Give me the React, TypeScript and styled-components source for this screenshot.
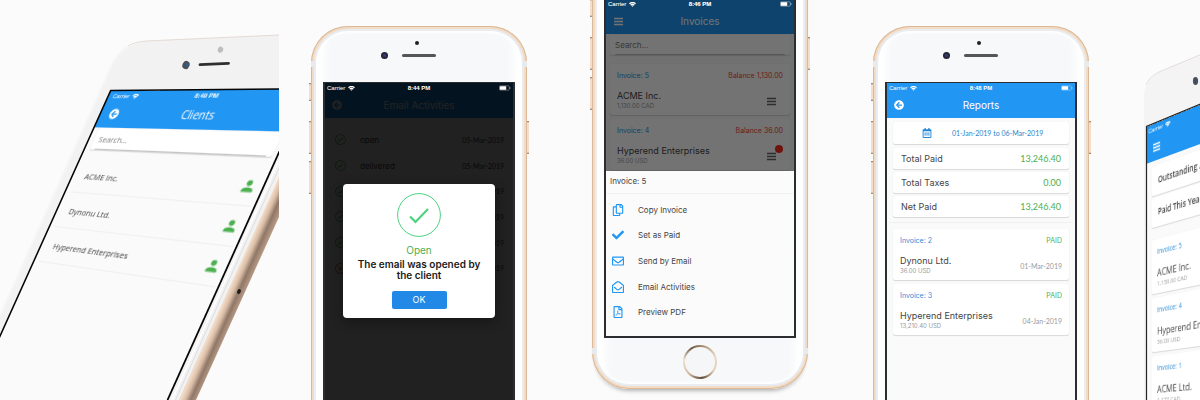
import React from 'react';
import styled, { createGlobalStyle, css } from 'styled-components';
import {
  FaArrowCircleLeft,
  FaCheck,
  FaRegCalendarAlt,
  FaRegCopy,
  FaRegEnvelope,
  FaRegEnvelopeOpen,
  FaRegFilePdf,
} from 'react-icons/fa';
import { IoIosCheckmarkCircleOutline, IoIosCloseCircleOutline, IoMdPerson } from 'react-icons/io';

const color = {
  page: '#fbfbfb',
  blue: '#2196f3',
  green: '#4caf50',
  red: '#f44336',
  text: '#444444',
  muted: '#9a9a9a',
};

const font = {
  main: 'Inter, "Liberation Sans", sans-serif',
  figures: 'Lato, Inter, sans-serif',
  tilted: '"Open Sans", "Noto Sans", sans-serif',
  status: '"Liberation Sans", sans-serif',
};

const GlobalStyle = createGlobalStyle`
  * { box-sizing: border-box; }
  body {
    margin: 0;
    background: ${color.page};
    font-family: ${font.main};
    color: ${color.text};
  }
  button, input { font: inherit; color: inherit; }
  p, h2, h3, ul { margin: 0; padding: 0; font: inherit; }
`;

type Point = [number, number];

/* Projects a flat w x h rectangle onto the corners
   top-left, top-right, bottom-left, bottom-right. */
function project(w: number, h: number, [tl, tr, bl, br]: Point[]) {
  const d1 = [tr[0] - br[0], tr[1] - br[1]];
  const d2 = [bl[0] - br[0], bl[1] - br[1]];
  const s = [tl[0] - tr[0] + br[0] - bl[0], tl[1] - tr[1] + br[1] - bl[1]];
  const det = d1[0] * d2[1] - d1[1] * d2[0];
  const g = (s[0] * d2[1] - s[1] * d2[0]) / det;
  const k = (d1[0] * s[1] - d1[1] * s[0]) / det;
  const m = [
    (tr[0] * (1 + g) - tl[0]) / w, (tr[1] * (1 + g) - tl[1]) / w, 0, g / w,
    (bl[0] * (1 + k) - tl[0]) / h, (bl[1] * (1 + k) - tl[1]) / h, 0, k / h,
    0, 0, 1, 0,
    tl[0], tl[1], 0, 1,
  ];
  return `matrix3d(${m.map((n) => n.toFixed(8)).join(',')})`;
}

/* ---------- Gallery ---------- */

const Gallery = styled.main`
  display: flex;
  width: 100%;
  height: 100vh;
  overflow: hidden;
`;

const Slide = styled.section<{ $drop?: number; $lift?: number }>`
  flex: 0 0 281px;
  padding: ${(p) => p.$drop ?? 0}px 33px 0 32px;
  margin-top: ${(p) => -(p.$lift ?? 0)}px;
`;

const TiltedSlide = styled.section<{ $width: number }>`
  flex: 0 0 ${(p) => p.$width}px;
  height: 100%;
  position: relative;
  overflow: hidden;
`;

const BodyDrawing = styled.svg`
  position: absolute;
  top: 0;
  left: 0;
  pointer-events: none;
`;

const TiltedScreen = styled.div<{ $matrix: string }>`
  position: absolute;
  top: 0;
  left: 0;
  width: 188px;
  background: #fafafa;
  font-family: ${font.tilted};
  transform-origin: 0 0;
  transform: ${(p) => p.$matrix};
`;

/* ---------- Phone ---------- */

const Body = styled.div<{ $shadow?: boolean }>`
  position: relative;
  width: 216px;
  height: 447px;
  padding: 56px 12px 51px;
  border-radius: 37px;
  background: linear-gradient(90deg, #ffffff 8px, #f6f8f9 20px, #f6f8f9 196px, #ffffff 208px);
  box-shadow: inset 0 0 0 1px #dab898, inset 0 0 0 3px #f3dcc6, inset 0 0 0 5px #e9edf1, inset 0 0 3px 7px #ffffff
    ${(p) => p.$shadow && css`, 0 5px 5px -4px rgba(0, 0, 0, 0.4)`};
`;

const Key = styled.i<{ $top: number; $height: number; $right?: boolean }>`
  position: absolute;
  top: ${(p) => p.$top}px;
  ${(p) => (p.$right ? 'right: -2px;' : 'left: -2px;')}
  width: 2px;
  height: ${(p) => p.$height}px;
  background: linear-gradient(#8b7560, #f4decb 2px, #f4decb calc(100% - 2px), #8b7560);
`;

const Antenna = styled.i<{ $top: number }>`
  position: absolute;
  left: 0;
  right: 0;
  top: ${(p) => p.$top}px;
  height: 6px;
  border: solid #e6eaed;
  border-width: 0 4px;
`;

const Sensor = styled.i`
  position: absolute;
  top: 15px;
  left: 104px;
  width: 4px;
  height: 4px;
  border-radius: 50%;
  background: #222222;
`;

const Camera = styled.i`
  position: absolute;
  top: 26px;
  left: 70px;
  width: 7px;
  height: 7px;
  border-radius: 50%;
  background: radial-gradient(#3b3f80, #20222c 60%);
`;

const Speaker = styled.i`
  position: absolute;
  top: 28px;
  left: 91px;
  width: 34px;
  height: 3px;
  border-radius: 2px;
  background: #555555;
`;

const HomeButton = styled.i`
  position: absolute;
  left: 91px;
  bottom: 10px;
  width: 34px;
  height: 34px;
  border-radius: 50%;
  border: 2px solid transparent;
  background: linear-gradient(#f4f6f7, #f4f6f7) padding-box,
    conic-gradient(from 20deg, #b59c82, #e9d9c6, #e3cdb4, #5f4a36, #d5bda3, #f0e2d2, #6e5943, #b59c82) border-box;
`;

const Screen = styled.div`
  position: relative;
  display: flex;
  flex-direction: column;
  height: 340px;
  border: 2px solid #2b2e31;
  border-top-width: 1px;
  background: #fafafa;
  overflow: hidden;
`;

function Phone({ children, shadow }: { children: React.ReactNode; shadow?: boolean }) {
  return (
    <Body $shadow={shadow}>
      <Key $top={57} $height={18} />
      <Key $top={95} $height={33} />
      <Key $top={135} $height={33} />
      <Key $top={95} $height={33} $right />
      <Antenna $top={35} />
      <Antenna $top={406} />
      <Sensor />
      <Camera />
      <Speaker />
      <Screen>{children}</Screen>
      <HomeButton />
    </Body>
  );
}

/* ---------- App bar ---------- */

const Bar = styled.header<{ $wide?: boolean }>`
  flex: none;
  width: ${(p) => (p.$wide ? 'calc(100% + 12px)' : '100%')};
  height: 35px;
  padding-left: ${(p) => (p.$wide ? 3 : 0)}px;
  background: ${color.blue};
  color: #ffffff;
`;

const Status = styled.div`
  display: grid;
  grid-template-columns: 1fr auto 1fr;
  align-items: center;
  height: 10px;
  padding: 0 2px;
  color: #ffffff;
  font: 6px/10px ${font.status};

  svg { display: block; }
`;

const Carrier = styled.span`
  display: flex;
  align-items: center;
  gap: 3px;
`;

const Clock = styled.b`
  font-weight: 700;
`;

const Battery = styled.span`
  justify-self: end;
`;

const TitleRow = styled.div`
  display: grid;
  grid-template-columns: 16px 1fr 16px;
  align-items: center;
  height: 24px;
  padding: 0 4px;
`;

const Title = styled.h2`
  text-align: center;
  font-size: 10px;
  line-height: 12px;
`;

const IconButton = styled.button`
  display: grid;
  place-items: center;
  padding: 0;
  border: 0;
  background: none;
`;

function Burger() {
  return (
    <svg width="9" height="9" viewBox="0 0 9 9" aria-hidden="true">
      <path d="M0 1.500h9M0 4.500h9M0 7.500h9" stroke="currentColor" strokeWidth="1.300" />
    </svg>
  );
}

function StatusBar({ time }: { time: string }) {
  return (
    <Status>
      <Carrier>
        Carrier
        <svg width="7" height="5" viewBox="0 0 14 10" fill="none" stroke="#fff" strokeWidth="2.400">
          <path d="M1 3.600C4.400.4 9.600.4 13 3.600M3.400 6.200c2-1.900 5.200-1.900 7.200 0" />
          <path d="M5 7.500c1.200-1 2.800-1 4 0l-2 2z" fill="#fff" stroke="none" />
        </svg>
      </Carrier>
      <Clock>{time}</Clock>
      <Battery>
        <svg width="12" height="6" viewBox="0 0 12 6">
          <rect x=".3" y=".8" width="10" height="4.400" rx="1" fill="none" stroke="#fff" strokeOpacity=".6" strokeWidth=".5" />
          <rect x=".8" y="1.200" width="6.400" height="3.600" rx=".5" fill="#fff" />
          <path d="M11 2.200v1.600" stroke="#fff" strokeOpacity=".6" strokeWidth=".7" />
        </svg>
      </Battery>
    </Status>
  );
}

type AppBarProps = { title: string; time: string; menu?: boolean; wide?: boolean };

function AppBar({ title, time, menu, wide }: AppBarProps) {
  return (
    <Bar $wide={wide}>
      <StatusBar time={time} />
      <TitleRow>
        <IconButton aria-label={menu ? 'Menu' : 'Back'}>
          {menu ? <Burger /> : <FaArrowCircleLeft size={10} />}
        </IconButton>
        <Title>{title}</Title>
      </TitleRow>
    </Bar>
  );
}

/* ---------- Cards and lists ---------- */

const Stack = styled.div<{ $inset?: number; $top?: number; $gap?: number }>`
  display: flex;
  flex-direction: column;
  gap: ${(p) => p.$gap ?? 4}px;
  padding: ${(p) => p.$top ?? 4}px ${(p) => p.$inset ?? 6}px 0;
`;

const Card = styled.article`
  border-radius: 2px;
  background: #ffffff;
  box-shadow: 0 1px 1px rgba(0, 0, 0, 0.13), 0 0 1px rgba(0, 0, 0, 0.1);
`;

const SearchCard = styled(Card)<{ $tall?: boolean }>`
  margin: 1px 4px 0 ${(p) => (p.$tall ? 6 : 4)}px;
  padding: 0 5px;
`;

const SearchInput = styled.input`
  display: block;
  width: 100%;
  height: 20px;
  padding: 0;
  border: 0;
  border-bottom: 1px solid #c4c4c4;
  background: none;
  font-size: 8px;
  outline: 0;

  &::placeholder { color: #808080; opacity: 1; }
`;

const SumCard = styled(Card)<{ $tall?: boolean }>`
  display: flex;
  align-items: center;
  justify-content: space-between;
  height: ${(p) => (p.$tall ? 28 : 21)}px;
  padding: 0 8px;
  font-size: ${(p) => (p.$tall ? 8 : 9)}px;
  line-height: 12px;
  font-weight: ${(p) => (p.$tall ? 600 : 400)};
  white-space: nowrap;
`;

const Sum = styled.span`
  color: ${color.green};
  font-family: ${font.figures};
`;

const DateCard = styled(Card)`
  height: 22px;
`;

const DateButton = styled.button`
  display: grid;
  grid-template-columns: 50px 1fr;
  align-items: center;
  width: 100%;
  height: 100%;
  padding: 0 9px;
  border: 0;
  background: none;
  color: #2a86c8;
  font-family: ${font.figures};
  font-size: 7px;
  text-align: left;

  svg { justify-self: center; color: #2186d8; }
`;

const Divider = styled.hr`
  width: 100%;
  margin: 0;
  border: 0;
  border-top: 1px solid #f0f0f0;
`;

const InvoiceBox = styled(Card)`
  display: grid;
  grid-template-columns: 1fr auto;
  grid-template-rows: 9px 22px 8px;
  height: 51px;
  padding: 7px 7px 0;
  white-space: nowrap;
`;

const Tag = styled.span<{ $tone: string; $end?: boolean }>`
  color: ${(p) => p.$tone};
  font-size: 7px;
  line-height: 9px;
  text-align: ${(p) => (p.$end ? 'right' : 'left')};
`;

const Name = styled.h3`
  align-self: end;
  font-size: 9px;
  line-height: 12px;
`;

const Amount = styled.p`
  grid-column: 1;
  color: ${color.muted};
  font-size: 6px;
  line-height: 8px;
`;

const Side = styled.div`
  position: relative;
  grid-column: 2;
  grid-row: 2 / 4;
  align-self: end;
  justify-self: end;
  height: 17px;
  color: ${color.muted};
  font-family: ${font.figures};
  font-size: 7px;
  line-height: 17px;
`;

const MenuButton = styled(IconButton)`
  height: 17px;
  margin-right: 7px;
  color: #666666;
`;

const Dot = styled.i`
  position: absolute;
  top: -3px;
  right: 0;
  width: 8px;
  height: 8px;
  border-radius: 50%;
  background: #f62a1e;
`;

type InvoiceProps = {
  no: number;
  name: string;
  amount: string;
  balance?: string;
  date?: string;
  dot?: boolean;
};

function Invoice({ no, name, amount, balance, date, dot }: InvoiceProps) {
  return (
    <InvoiceBox>
      <Tag $tone="#2f8fd8">Invoice: {no}</Tag>
      {balance ? (
        <Tag $tone={color.red} $end>Balance {balance}</Tag>
      ) : (
        <Tag $tone={color.green} $end>PAID</Tag>
      )}
      <Name>{name}</Name>
      <Amount>{amount}</Amount>
      <Side>
        {date ?? (
          <MenuButton aria-label="Invoice actions">
            <Burger />
          </MenuButton>
        )}
        {dot && <Dot />}
      </Side>
    </InvoiceBox>
  );
}

const ClientList = styled.ul`
  height: 270px;
  margin: 8px 3px 0 6px;
  list-style: none;
`;

const Client = styled.li`
  display: flex;
  align-items: center;
  justify-content: space-between;
  height: 33px;
  padding: 0 3px 0 8px;
  border-bottom: 1px solid #f0f0f0;
  font-size: 8px;

  svg { color: ${color.green}; }
`;

const ActivityList = styled.ul`
  display: flex;
  flex-direction: column;
  height: 154px;
  margin-top: 9px;
  padding: 0 9px;
  list-style: none;
`;

const Activity = styled.li<{ $failed?: boolean }>`
  flex: 1;
  display: grid;
  grid-template-columns: 26px 1fr auto;
  align-items: center;
  font-size: 8px;

  svg { color: ${(p) => (p.$failed ? color.red : color.green)}; }
`;

const ActivityDate = styled.time`
  font-family: ${font.figures};
  font-size: 7px;
`;

/* ---------- Overlays ---------- */

const Shade = styled.div<{ $alpha: number }>`
  position: absolute;
  inset: 0;
  z-index: 1;
  background: rgba(0, 0, 0, ${(p) => p.$alpha});
`;

const Dialog = styled.div`
  position: absolute;
  z-index: 2;
  top: 101px;
  left: 50%;
  width: 152px;
  margin-left: -76px;
  padding: 9px 13px;
  display: flex;
  flex-direction: column;
  align-items: center;
  border-radius: 4px;
  background: #ffffff;
  box-shadow: 0 4px 12px rgba(0, 0, 0, 0.35);
  text-align: center;
`;

const DialogTitle = styled.h2`
  margin-top: 7px;
  color: ${color.green};
  font-size: 10px;
  line-height: 12px;
`;

const DialogText = styled.p`
  margin-top: 3px;
  color: #1a1a1a;
  font-size: 10px;
  font-weight: 600;
  line-height: 11px;
`;

const OkButton = styled.button`
  width: 55px;
  height: 18px;
  margin-top: 10px;
  padding: 0;
  border: 0;
  border-radius: 2px;
  background: #2389e6;
  color: #ffffff;
  font-size: 9px;
  line-height: 18px;
`;

const Sheet = styled.div`
  position: absolute;
  z-index: 2;
  left: 0;
  right: 0;
  bottom: 0;
  height: 165px;
  display: flex;
  flex-direction: column;
  background: #fbfbfb;
`;

const SheetTitle = styled.h2`
  height: 23px;
  padding: 4px 4px 0;
  border-bottom: 1px solid #f0f0f0;
  font-size: 8px;
  line-height: 12px;
`;

const SheetActions = styled.div`
  flex: 1;
  display: flex;
  flex-direction: column;
  padding: 3px 6px 11px;
`;

const SheetAction = styled.button`
  flex: 1;
  display: grid;
  grid-template-columns: 26px 1fr;
  align-items: center;
  padding: 0;
  border: 0;
  background: none;
  font-size: 8px;
  text-align: left;

  svg { width: 12px; color: ${color.blue}; }
`;

/* ---------- Slides ---------- */

function ClientsSlide() {
  return (
    <TiltedSlide $width={279}>
      <BodyDrawing width="279" height="400" viewBox="0 0 279 400" aria-hidden="true">
        <defs>
          <linearGradient id="gold" gradientUnits="userSpaceOnUse" x1="218" y1="309" x2="236" y2="317">
            <stop offset="0" stopColor="#cdb7a4" />
            <stop offset=".12" stopColor="#f3dcc8" />
            <stop offset=".35" stopColor="#d9bda6" />
            <stop offset=".6" stopColor="#8f7767" />
            <stop offset="1" stopColor="#c3a48e" />
          </linearGradient>
        </defs>
        <path d="M-10 338 110 69C117 53 128 44 146 41L279 35V177L179 400H-10Z" fill="#f2f2f2" />
        <path d="M128 46C133 43 139 41.500 146 41L279 35" fill="none" stroke="#dccdc6" strokeWidth=".7" />
        <path d="M-10 338 110 69C115 57 121 50 128 46" fill="none" stroke="#f6f6f6" strokeWidth="2" />
        <path d="M279 160 172 400" stroke="#ffffff" strokeWidth="1.500" />
        <path d="M279 168 175.500 400" stroke="#dedede" strokeWidth="1" />
        <path d="M279 177V217L196 400H179Z" fill="url(#gold)" />
        <ellipse cx="239" cy="291.500" rx="1.800" ry="2.500" transform="rotate(25 239 291.500)" fill="#1d1a18" />
        <ellipse cx="220.500" cy="49.700" rx="2.600" ry="3.100" transform="rotate(25 220.500 49.700)" fill="#bdbdbd" />
        <ellipse cx="186" cy="65" rx="3.500" ry="4.200" transform="rotate(25 186 65)" fill="#4b4f58" />
        <ellipse cx="187" cy="65" rx="1.500" ry="2" fill="#2f5f93" />
        <path d="M200 64.700 228.500 63.400" stroke="#2e2e30" strokeWidth="2.800" strokeLinecap="round" />
      </BodyDrawing>
      <TiltedScreen $matrix={project(188, 163, [[111, 91], [307, 89], [34, 261], [218, 288]])}>
        <AppBar title="Clients" time="8:49 PM" wide />
        <SearchCard $tall>
          <SearchInput aria-label="Search clients" placeholder="Search..." />
        </SearchCard>
        <ClientList>
          {['ACME Inc.', 'Dynonu Ltd.', 'Hyperend Enterprises'].map((name) => (
            <Client key={name}>
              {name}
              <IoMdPerson size={13} />
            </Client>
          ))}
        </ClientList>
      </TiltedScreen>
      <BodyDrawing width="279" height="400" viewBox="0 0 279 400" aria-hidden="true">
        <path d="M-4 345 110.700 90.500 307.500 88.800" fill="none" stroke="#050505" strokeWidth="1.600" />
        <path d="M285 139 167.500 400" stroke="#050505" strokeWidth="1.800" />
      </BodyDrawing>
    </TiltedSlide>
  );
}

function ActivitiesSlide() {
  return (
    <Slide $drop={26}>
      <Phone>
        <AppBar title="Email Activities" time="8:44 PM" />
        <ActivityList>
          {['open', 'delivered', 'open', 'open', 'open', 'fail'].map((label, i) => (
            <Activity key={i} $failed={label === 'fail'}>
              {label === 'fail' ? <IoIosCloseCircleOutline size={13} /> : <IoIosCheckmarkCircleOutline size={13} />}
              {label}
              <ActivityDate>05-Mar-2019</ActivityDate>
            </Activity>
          ))}
        </ActivityList>
        <Shade $alpha={0.87}>
          <StatusBar time="8:44 PM" />
        </Shade>
        <Dialog role="dialog" aria-label="Open">
          <svg width="44" height="44" viewBox="0 0 44 44" fill="none" stroke="#4cd37f" aria-hidden="true">
            <circle cx="22" cy="22" r="21.400" strokeWidth="1" />
            <path d="M13 23.500 18.500 29 31 16" strokeWidth="2.200" />
          </svg>
          <DialogTitle>Open</DialogTitle>
          <DialogText>The email was opened by the client</DialogText>
          <OkButton>OK</OkButton>
        </Dialog>
      </Phone>
    </Slide>
  );
}

const actions = [
  { label: 'Copy Invoice', icon: FaRegCopy },
  { label: 'Set as Paid', icon: FaCheck },
  { label: 'Send by Email', icon: FaRegEnvelope },
  { label: 'Email Activities', icon: FaRegEnvelopeOpen },
  { label: 'Preview PDF', icon: FaRegFilePdf },
];

function InvoicesSlide() {
  return (
    <Slide $lift={58}>
      <Phone shadow>
        <AppBar title="Invoices" time="8:46 PM" menu />
        <SearchCard>
          <SearchInput aria-label="Search invoices" placeholder="Search..." />
        </SearchCard>
        <Stack $inset={4} $top={9}>
          <Invoice no={5} name="ACME Inc." amount="1,130.00 CAD" balance="1,130.00" />
          <Invoice no={4} name="Hyperend Enterprises" amount="36.00 USD" balance="36.00" dot />
        </Stack>
        <Shade $alpha={0.55}>
          <StatusBar time="8:46 PM" />
        </Shade>
        <Sheet>
          <SheetTitle>Invoice: 5</SheetTitle>
          <SheetActions>
            {actions.map(({ label, icon: Icon }) => (
              <SheetAction key={label}>
                <Icon size={12} />
                {label}
              </SheetAction>
            ))}
          </SheetActions>
        </Sheet>
      </Phone>
    </Slide>
  );
}

function ReportsSlide() {
  return (
    <Slide $drop={26}>
      <Phone>
        <AppBar title="Reports" time="8:48 PM" />
        <Stack>
          <DateCard>
            <DateButton>
              <FaRegCalendarAlt size={10} />
              01-Jan-2019 to 06-Mar-2019
            </DateButton>
          </DateCard>
        </Stack>
        <Stack $gap={3}>
          <SumCard>Total Paid <Sum>13,246.40</Sum></SumCard>
          <SumCard>Total Taxes <Sum>0.00</Sum></SumCard>
          <SumCard>Net Paid <Sum>13,246.40</Sum></SumCard>
        </Stack>
        <Stack $inset={2} $top={5}>
          <Divider />
        </Stack>
        <Stack $top={6}>
          <Invoice no={2} name="Dynonu Ltd." amount="36.00 USD" date="01-Mar-2019" />
          <Invoice no={3} name="Hyperend Enterprises" amount="13,210.40 USD" date="04-Jan-2019" />
        </Stack>
      </Phone>
    </Slide>
  );
}

function OverviewSlide() {
  return (
    <TiltedSlide $width={281}>
      <BodyDrawing width="281" height="400" viewBox="0 0 281 400" aria-hidden="true">
        <path d="M22 400V98C22 84 29 75 43 69.500L281 -30V400Z" fill="#f4f4f4" />
        <path d="M24 85C27 78 33 73 43 69.500L281 -30" fill="none" stroke="#dfd6d1" strokeWidth=".8" />
        <ellipse cx="73.500" cy="81" rx="2.600" ry="4" fill="#4b4f58" />
        <ellipse cx="74" cy="81" rx="1.200" ry="1.800" fill="#35527d" />
      </BodyDrawing>
      <TiltedScreen $matrix={project(65, 217, [[25, 127], [78, 105], [25, 354], [78, 347]])}>
        <AppBar title="Invoices" time="8:45 PM" menu />
        <Stack $gap={2} $top={5}>
          <SumCard $tall>Outstanding Amount</SumCard>
          <SumCard $tall>Paid This Year</SumCard>
        </Stack>
        <Stack $top={12}>
          <Invoice no={5} name="ACME Inc." amount="1,130.00 CAD" balance="1,130.00" />
          <Invoice no={4} name="Hyperend Enterprises" amount="36.00 USD" balance="36.00" />
          <Invoice no={1} name="ACME Ltd." amount="1,177 CAD" balance="1,177.00" />
        </Stack>
      </TiltedScreen>
      <BodyDrawing width="281" height="400" viewBox="0 0 281 400" aria-hidden="true">
        <path d="M24.500 400V126.500L281 20" fill="none" stroke="#222426" strokeWidth="1.200" />
      </BodyDrawing>
    </TiltedSlide>
  );
}

export default function App() {
  return (
    <>
      <GlobalStyle />
      <Gallery>
        <ClientsSlide />
        <ActivitiesSlide />
        <InvoicesSlide />
        <ReportsSlide />
        <OverviewSlide />
      </Gallery>
    </>
  );
}
